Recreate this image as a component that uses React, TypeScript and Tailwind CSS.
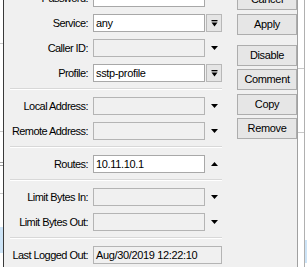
import React from "react";

type Suffix = "menu" | "down" | "up" | "none";

const DownTri = () => (
  <svg width="7" height="4" viewBox="0 0 7 4">
    <polygon points="0,0 7,0 3.5,4" fill="#000" />
  </svg>
);

const UpTri = () => (
  <svg width="7" height="4" viewBox="0 0 7 4">
    <polygon points="0,4 7,4 3.5,0" fill="#000" />
  </svg>
);

const MenuIcon = () => (
  <svg width="7" height="7" viewBox="0 0 7 7">
    <rect x="0.5" y="0" width="6" height="1.3" fill="#000" />
    <polygon points="0.5,2.5 6.5,2.5 3.5,6.5" fill="#000" />
  </svg>
);

const Field = ({
  label,
  value,
  suffix = "none",
  enabled = true,
  wide = false,
}: {
  label: string;
  value?: string;
  suffix?: Suffix;
  enabled?: boolean;
  wide?: boolean;
}) => (
  <div className="flex h-[18px] items-center">
    <div className="w-[84px] text-right leading-none tracking-[-0.55px] whitespace-nowrap">{label}</div>
    <div
      className={`ml-[5px] flex h-full items-center border pl-[2px] leading-none whitespace-nowrap ${
        wide ? "w-[129px]" : "w-[112px]"
      } ${enabled ? "border-[#a8a8a8] bg-white" : "border-[#b4b4b4] bg-[#f0f0f0]"}`}
    >
      {value}
    </div>
    {!wide && (
      <div className="flex h-full w-[17px] items-center justify-center">
        {suffix === "menu" && (
          <div className="ml-[1px] flex h-full w-[16px] items-center justify-center border border-[#b8b8b8] bg-[#e5e5e5]">
            <MenuIcon />
          </div>
        )}
        {suffix === "down" && (
          <div className="ml-[2px] flex">
            <DownTri />
          </div>
        )}
        {suffix === "up" && (
          <div className="ml-[2px] flex">
            <UpTri />
          </div>
        )}
      </div>
    )}
  </div>
);

const Separator = () => (
  <div className="mt-[6px] mb-[7px] ml-[6px] h-[2px] w-[212px] border-t border-b border-t-[#d8d8d8] border-b-white" />
);

const Btn = ({ text, top }: { text: string; top: string }) => (
  <div
    className={`flex h-[21px] w-[60px] items-center justify-center border border-[#adadad] bg-[#e6e6e6] leading-none ${top}`}
  >
    {text}
  </div>
);

export default function App() {
  return (
    <div className="flex h-[267px] w-[307px] overflow-hidden bg-white font-['Liberation_Sans',Arial,sans-serif] text-[11px] tracking-[-0.35px] text-black">
      {/* window behind, left */}
      <div className="flex w-[3px] shrink-0 flex-col">
        <div className="mt-[43px] h-px bg-[#c8c8c8]" />
        <div className="mt-[87px] h-px bg-[#c8c8c8]" />
        <div className="mt-[30px] h-px bg-[#a0a0a0]" />
        <div className="mt-[2px] h-px bg-[#a0a0a0]" />
        <div className="mt-[27px] h-px bg-[#c8c8c8]" />
        <div className="mt-[33px] h-[26px] bg-[#cde4f7]" />
      </div>
      <div className="w-px shrink-0 bg-[#3a3a3a]" />

      {/* dialog */}
      <div className="flex w-[293px] shrink-0 bg-[#f0f0f0]">
        <div className="-mt-[11px] flex w-[219px] flex-col">
          <div className="flex flex-col gap-[7px]">
            <Field label="Password:" suffix="up" />
            <Field label="Service:" value="any" suffix="menu" />
            <Field label="Caller ID:" suffix="down" enabled={false} />
            <Field label="Profile:" value="sstp-profile" suffix="menu" />
          </div>
          <Separator />
          <div className="flex flex-col gap-[7px]">
            <Field label="Local Address:" suffix="down" enabled={false} />
            <Field label="Remote Address:" suffix="down" enabled={false} />
          </div>
          <Separator />
          <Field label="Routes:" value="10.11.10.1" suffix="up" />
          <Separator />
          <div className="flex flex-col gap-[7px]">
            <Field label="Limit Bytes In:" suffix="down" enabled={false} />
            <Field label="Limit Bytes Out:" suffix="down" enabled={false} />
          </div>
          <Separator />
          <Field label="Last Logged Out:" value="Aug/30/2019 12:22:10" enabled={false} wide />
        </div>

        <div className="-mt-[11px] ml-[14px] flex flex-col">
          <Btn text="Cancel" top="" />
          <Btn text="Apply" top="mt-[4px]" />
          <Btn text="Disable" top="mt-[10px]" />
          <Btn text="Comment" top="mt-[3px]" />
          <Btn text="Copy" top="mt-[4px]" />
          <Btn text="Remove" top="mt-[3px]" />
        </div>
      </div>

      {/* window behind, right */}
      <div className="w-px shrink-0 bg-[#a0a0a0]" />
      <div className="flex w-[6px] shrink-0 flex-col">
        <div className="mt-[68px] h-px bg-[#c8c8c8]" />
        <div className="mt-[63px] h-px bg-[#c8c8c8]" />
      </div>
      <div className="w-px shrink-0 bg-[#b0b0b0]" />
      <div className="flex w-[2px] shrink-0 flex-col">
        <div className="mt-[240px] h-[23px] bg-[#cde4f7]" />
      </div>
    </div>
  );
}
